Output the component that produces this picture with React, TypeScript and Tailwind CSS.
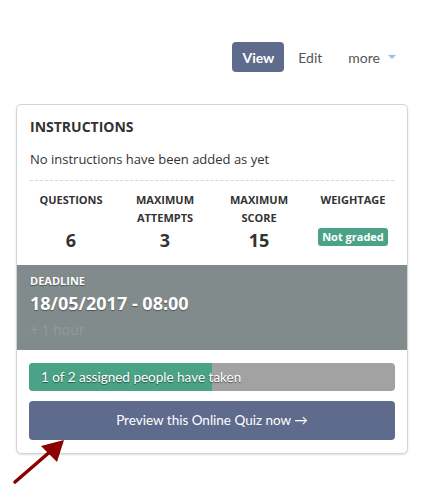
import React from 'react';

const stats = [
  { label: ['QUESTIONS'], value: '6' },
  { label: ['MAXIMUM', 'ATTEMPTS'], value: '3' },
  { label: ['MAXIMUM', 'SCORE'], value: '15' },
];

function App() {
  const taken = 1;
  const assigned = 2;

  return (
    <div className="relative w-[423px] h-[490px] bg-white text-[#333] font-['Open_Sans',sans-serif]">
      {/* Top actions */}
      <div className="flex justify-end items-center pt-[42px] pr-[27px] font-['Lato',sans-serif] text-[14px]">
        <button className="h-[30px] px-[10px] rounded-[4px] bg-[#5f6b8d] text-white font-bold">View</button>
        <button className="h-[30px] px-[14px] text-[#555]">Edit</button>
        <button className="h-[30px] pl-[12px] text-[#555] flex items-center">
          more
          <span className="ml-[8px] w-0 h-0 border-x-[4px] border-x-transparent border-t-[4px] border-t-[#9cc3e5]" />
        </button>
      </div>

      {/* Card */}
      <div className="mt-[32px] mx-[16px] w-[392px] border border-[#d3d3d3] rounded-[5px] shadow-[0_1px_2px_rgba(0,0,0,0.12)] bg-white overflow-hidden">
        <div className="px-[13px] pt-[12px]">
          <h3 className="text-[14px] font-bold leading-[20px]">INSTRUCTIONS</h3>
          <p className="mt-[12px] text-[13px] leading-[20px]">No instructions have been added as yet</p>
          <div className="mt-[11px] border-t border-dashed border-[#d6d6d6]" />
        </div>

        <div className="grid grid-cols-4 px-[7px] pt-[10px] pb-[12px] text-center">
          {stats.map((s) => (
            <div key={s.value} className="flex flex-col items-center">
              <div className="text-[11px] font-bold leading-[18px] h-[36px]">
                {s.label.map((l) => (
                  <div key={l}>{l}</div>
                ))}
              </div>
              <div className="text-[18px] font-bold leading-[26px]">{s.value}</div>
            </div>
          ))}
          <div className="flex flex-col items-center">
            <div className="text-[11px] font-bold leading-[18px] h-[36px]">WEIGHTAGE</div>
            <span className="mt-[1px] px-[4px] h-[18px] rounded-[3px] bg-[#4aa386] text-white text-[11px] font-bold leading-[18px]">
              Not graded
            </span>
          </div>
        </div>

        {/* Deadline */}
        <div className="bg-[#818b8b] px-[13px] pt-[7px] pb-[10px] text-white">
          <div className="text-[11px] font-bold leading-[18px] [text-shadow:0_1px_1px_rgba(0,0,0,0.4)]">DEADLINE</div>
          <div className="text-[18px] font-bold leading-[26px] [text-shadow:0_1px_1px_rgba(0,0,0,0.4)]">18/05/2017 - 08:00</div>
          <div className="mt-[4px] text-[14px] leading-[20px] text-[#939a9a]">+ 1 hour</div>
        </div>

        <div className="px-[12px] pt-[13px] pb-[13px]">
          {/* Progress */}
          <div className="relative h-[28px] rounded-[4px] bg-[#a2a2a2] overflow-hidden font-['Lato',sans-serif]">
            <div className="h-full bg-[#4aa386]" style={{ width: `${(taken / assigned) * 100}%` }} />
            <span className="absolute left-[12px] top-0 leading-[28px] text-[13.5px] text-white [text-shadow:0_1px_1px_rgba(0,0,0,0.5)]">
              {taken} of {assigned} assigned people have taken
            </span>
          </div>

          <button className="mt-[10px] w-full h-[39px] rounded-[4px] bg-[#5f6b8d] text-white text-[13.5px] font-['Lato',sans-serif]">
            Preview this Online Quiz now →
          </button>
        </div>
      </div>

      {/* Annotation arrow */}
      <svg className="absolute left-0 top-0 pointer-events-none" width="423" height="490">
        <line x1="15" y1="482" x2="52" y2="450" stroke="#8b0000" strokeWidth="3.5" strokeLinecap="round" />
        <polygon points="64,440 41,446 57,462" fill="#8b0000" />
      </svg>
    </div>
  );
}

export default App;
